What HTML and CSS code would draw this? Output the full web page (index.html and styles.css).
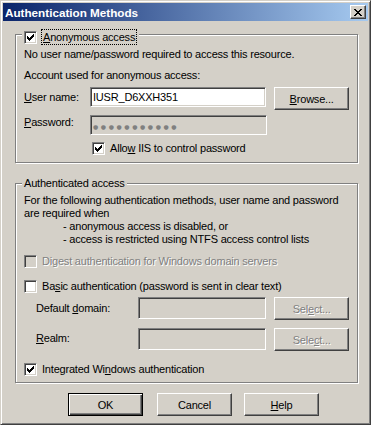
FILE: index.html
```html
<!DOCTYPE html>
<html lang="en">
<head>
  <meta charset="UTF-8">
  <title>Authentication Methods</title>
  <link rel="stylesheet" href="styles.css">
</head>
<body>
  <div class="window">
    <div class="titlebar">
      <span class="title">Authentication Methods</span>
      <button class="close-btn" title="Close">
        <svg width="8" height="7" viewBox="0 0 8 7" shape-rendering="crispEdges">
          <rect x="0" y="0" width="2" height="1"/><rect x="6" y="0" width="2" height="1"/>
          <rect x="1" y="1" width="2" height="1"/><rect x="5" y="1" width="2" height="1"/>
          <rect x="2" y="2" width="4" height="1"/>
          <rect x="3" y="3" width="2" height="1"/>
          <rect x="2" y="4" width="4" height="1"/>
          <rect x="1" y="5" width="2" height="1"/><rect x="5" y="5" width="2" height="1"/>
          <rect x="0" y="6" width="2" height="1"/><rect x="6" y="6" width="2" height="1"/>
        </svg>
      </button>
    </div>

    <div class="content">
      <!-- Anonymous access -->
      <div class="group group-anon">
        <div class="legend legend-check">
          <span class="check checked"></span>
          <span class="focus-label"><u>A</u>nonymous access</span>
        </div>
        <p class="line anon-note">No user name/password required to access this resource.</p>
        <p class="line anon-account">Account used for anonymous access:</p>
        <div class="field-row row-user">
          <span class="field-label"><u>U</u>ser name:</span>
          <div class="textbox textbox-wide">IUSR_D6XXH351</div>
          <button class="btn btn-side"><u>B</u>rowse...</button>
        </div>
        <div class="field-row row-pass">
          <span class="field-label label-top"><u>P</u>assword:</span>
          <div class="textbox textbox-wide disabled"><span class="dots">●●●●●●●●●●●</span></div>
        </div>
        <div class="check-row row-allow">
          <span class="check checked"></span>
          <span>Allo<u>w</u> IIS to control password</span>
        </div>
      </div>

      <!-- Authenticated access -->
      <div class="group group-auth">
        <div class="legend legend-text">Authenticated access</div>
        <div class="auth-note">
          <p class="line">For the following authentication methods, user name and password</p>
          <p class="line">are required when</p>
          <p class="line indent">- anonymous access is disabled, or</p>
          <p class="line indent">- access is restricted using NTFS access control lists</p>
        </div>
        <div class="check-row row-digest disabled-text">
          <span class="check disabled"></span>
          <span>Di<u>g</u>est authentication for Windows domain servers</span>
        </div>
        <div class="check-row row-basic">
          <span class="check"></span>
          <span>Ba<u>s</u>ic authentication (password is sent in clear text)</span>
        </div>
        <div class="field-row row-domain">
          <span class="field-label label-auth">Default <u>d</u>omain:</span>
          <div class="textbox textbox-narrow disabled"></div>
          <button class="btn btn-side disabled-text" disabled>Sel<u>e</u>ct...</button>
        </div>
        <div class="field-row row-realm">
          <span class="field-label label-auth label-top"><u>R</u>ealm:</span>
          <div class="textbox textbox-narrow disabled"></div>
          <button class="btn btn-side disabled-text" disabled>Sele<u>c</u>t...</button>
        </div>
        <div class="check-row row-integrated">
          <span class="check checked"></span>
          <span>Integrated Wi<u>n</u>dows authentication</span>
        </div>
      </div>

      <div class="dialog-buttons">
        <button class="btn btn-default">OK</button>
        <button class="btn btn-cancel">Cancel</button>
        <button class="btn btn-help"><u>H</u>elp</button>
      </div>
    </div>
  </div>
</body>
</html>
```

FILE: styles.css
```css
/* Classic Windows dialog */
* {
  box-sizing: border-box;
}
body {
  margin: 0;
  background: #d4d0c8;
  font-family: "Liberation Sans", Arial, sans-serif;
  font-size: 11px;
  letter-spacing: -0.2px;
  color: #000;
}
.window {
  width: 371px;
  height: 425px;
  background: #d4d0c8;
  border: 1px solid;
  border-color: #d4d0c8 #404040 #404040 #d4d0c8;
  box-shadow: inset 1px 1px #fff, inset -1px -1px #808080;
  padding: 2px;
}

/* Title bar */
.titlebar {
  height: 18px;
  display: flex;
  align-items: center;
  justify-content: space-between;
  padding: 0 2px;
  background: linear-gradient(to right, #0a246a, #a6caf0);
}
.title {
  color: #fff;
  font-weight: bold;
  font-size: 11.7px;
  letter-spacing: 0;
}
.close-btn {
  width: 16px;
  height: 14px;
  padding: 0;
  display: flex;
  align-items: center;
  justify-content: center;
  background: #d4d0c8;
  border: 1px solid;
  border-color: #fff #404040 #404040 #fff;
  box-shadow: inset -1px -1px #808080;
}

.content {
  padding: 13px 0 0 12px;
}

/* Group boxes */
.group {
  width: 343px;
  border: 1px solid #808080;
  box-shadow: inset 1px 1px #fff, 1px 1px #fff;
  padding: 0 8px;
}
.group-anon {
  height: 129px;
}
.group-auth {
  height: 200px;
  margin-top: 20px;
}
.legend {
  width: fit-content;
  background: #d4d0c8;
  margin-left: -2px;
  padding: 0 2px;
}
.legend-check {
  display: flex;
  align-items: flex-start;
  margin-top: -6px;
  height: 16px;
}
.legend-check .check {
  margin-top: 2px;
}
.legend-text {
  margin-top: -7px;
  line-height: 13px;
}
.focus-label {
  margin-left: 4px;
  padding: 0 1px;
  line-height: 14px;
  border: 1px dotted #000;
}

.line {
  margin: 0;
  line-height: 13px;
  white-space: nowrap;
}
.anon-note {
  margin-top: 3px;
}
.anon-account {
  margin-top: 8px;
}
.auth-note {
  margin-top: 4px;
}
.indent {
  padding-left: 39px;
}

/* Checkboxes */
.check {
  width: 13px;
  height: 13px;
  flex: none;
  background: #fff;
  border: 1px solid;
  border-color: #808080 #fff #fff #808080;
  box-shadow: inset 1px 1px #404040, inset -1px -1px #d4d0c8;
  background-repeat: no-repeat;
  background-position: 2px 2px;
}
.check.checked {
  background-image: url("data:image/svg+xml;utf8,<svg xmlns='http://www.w3.org/2000/svg' width='7' height='7' shape-rendering='crispEdges'><rect x='6' y='0' width='1' height='1'/><rect x='5' y='1' width='2' height='1'/><rect x='0' y='2' width='1' height='1'/><rect x='4' y='2' width='3' height='1'/><rect x='0' y='3' width='2' height='1'/><rect x='3' y='3' width='3' height='1'/><rect x='0' y='4' width='5' height='1'/><rect x='1' y='5' width='3' height='1'/><rect x='2' y='6' width='1' height='1'/></svg>");
}
.check.disabled {
  background-color: #d4d0c8;
}
.check-row {
  display: flex;
  align-items: center;
  gap: 5px;
  height: 13px;
  line-height: 13px;
  white-space: nowrap;
}
.row-allow {
  margin-top: 7px;
  padding-left: 68px;
}
.row-digest {
  margin-top: 9px;
}
.row-basic {
  margin-top: 12px;
}
.row-integrated {
  margin-top: 12px;
}
.disabled-text {
  color: #808080;
  text-shadow: 1px 1px #fff;
}

/* Label + edit + button rows */
.field-row {
  display: flex;
  align-items: flex-start;
}
.field-label {
  width: 66px;
  flex: none;
  line-height: 13px;
  padding-top: 4px;
  white-space: nowrap;
}
.field-label.label-top {
  padding-top: 1px;
}
.label-auth {
  width: 114px;
  padding-left: 12px;
  padding-top: 5px;
}
.label-auth.label-top {
  padding-top: 4px;
}
.row-user {
  margin-top: 5px;
}
.row-pass {
  margin-top: 5px;
}
.row-domain {
  margin-top: 4px;
}
.row-realm {
  margin-top: 8px;
}
.textbox {
  height: 20px;
  background: #fff;
  border: 1px solid;
  border-color: #808080 #fff #fff #808080;
  box-shadow: inset 1px 1px #404040, inset -1px -1px #d4d0c8;
  padding: 3px 2px;
  line-height: 13px;
  white-space: nowrap;
  overflow: hidden;
}
.textbox-wide {
  width: 177px;
}
.textbox-narrow {
  width: 129px;
  height: 22px;
}
.textbox.disabled {
  background: #d4d0c8;
}
.dots {
  font-family: "DejaVu Sans", sans-serif;
  font-size: 6px;
  letter-spacing: 2.6px;
  color: #808080;
}

/* Push buttons */
.btn {
  width: 75px;
  height: 23px;
  padding: 0;
  background: #d4d0c8;
  border: 1px solid;
  border-color: #fff #404040 #404040 #fff;
  box-shadow: inset -1px -1px #808080;
  font-family: inherit;
  font-size: 11px;
  letter-spacing: -0.2px;
  color: #000;
}
.btn.disabled-text {
  color: #808080;
}
.btn-side {
  margin-left: 8px;
}
.btn-default {
  border-color: #000;
  box-shadow: inset 1px 1px #fff, inset -1px -1px #404040, inset -2px -2px #808080;
}
.dialog-buttons {
  display: flex;
  margin-top: 10px;
  padding-left: 53px;
}
.btn-cancel {
  margin-left: 14px;
}
.btn-help {
  margin-left: 12px;
}
```
